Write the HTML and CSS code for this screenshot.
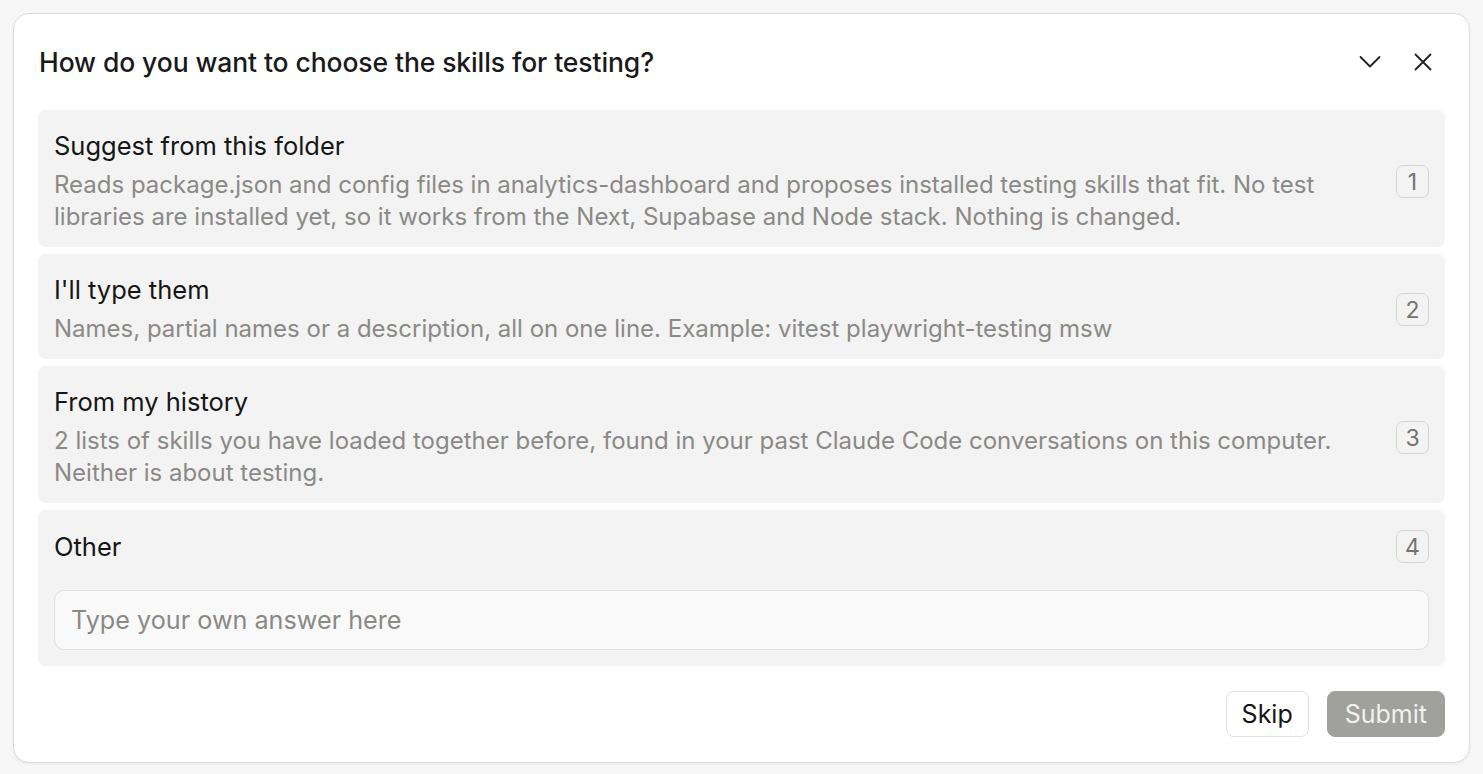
FILE: index.html
```html
<!DOCTYPE html>
<html lang="en">
<head>
<meta charset="utf-8">
<title>Choose skills</title>
<link rel="stylesheet" href="styles.css">
</head>
<body>
<div class="dialog">
  <div class="header">
    <h1 class="title">How do you want to choose the skills for testing?</h1>
    <div class="header-actions">
      <button class="icon-btn" aria-label="Collapse">
        <svg width="22" height="22" viewBox="0 0 22 22" fill="none" stroke="#222" stroke-width="1.8" stroke-linecap="round" stroke-linejoin="round"><path d="M1.5 6 L11 15.5 L20.5 6"/></svg>
      </button>
      <button class="icon-btn" aria-label="Close">
        <svg width="18" height="18" viewBox="0 0 18 18" fill="none" stroke="#222" stroke-width="1.8" stroke-linecap="round"><path d="M1.5 1.5 L16.5 16.5 M16.5 1.5 L1.5 16.5"/></svg>
      </button>
    </div>
  </div>

  <div class="options">
    <div class="option">
      <div class="option-row">
        <div class="option-text">
          <div class="option-title">Suggest from this folder</div>
          <div class="option-desc">Reads package.json and config files in analytics-dashboard and proposes installed testing skills that fit. No test libraries are installed yet, so it works from the Next, Supabase and Node stack. Nothing is changed.</div>
        </div>
        <span class="key">1</span>
      </div>
    </div>
    <div class="option">
      <div class="option-row">
        <div class="option-text">
          <div class="option-title">I'll type them</div>
          <div class="option-desc">Names, partial names or a description, all on one line. Example: vitest playwright-testing msw</div>
        </div>
        <span class="key">2</span>
      </div>
    </div>
    <div class="option">
      <div class="option-row">
        <div class="option-text">
          <div class="option-title">From my history</div>
          <div class="option-desc">2 lists of skills you have loaded together before, found in your past Claude Code conversations on this computer. Neither is about testing.</div>
        </div>
        <span class="key">3</span>
      </div>
    </div>
    <div class="option">
      <div class="option-row">
        <div class="option-text">
          <div class="option-title">Other</div>
        </div>
        <span class="key">4</span>
      </div>
      <input class="answer" type="text" placeholder="Type your own answer here">
    </div>
  </div>

  <div class="footer">
    <button class="btn btn-skip">Skip</button>
    <button class="btn btn-submit">Submit</button>
  </div>
</div>
</body>
</html>
```
FILE: styles.css
```css
* { box-sizing: border-box; }
html, body { margin: 0; padding: 0; }
body {
  background: #f7f7f7;
  padding: 13px;
  font-family: Inter, "Noto Sans", "Liberation Sans", sans-serif;
  color: #1a1a1a;
}
.dialog {
  background: #fff;
  border: 1px solid #dcdcdc;
  border-radius: 16px;
  box-shadow: 0 1px 3px rgba(0,0,0,0.06);
  padding: 24px 24px 25px;
  height: 750px;
}
.header {
  display: flex;
  align-items: center;
  justify-content: space-between;
  height: 48px;
  margin-bottom: 24px;
}
.title {
  margin: 0 0 0 1px;
  font-size: 26.5px;
  font-weight: 500;
  letter-spacing: -0.1px;
}
.header-actions {
  display: flex;
  align-items: center;
  gap: 33px;
  padding-right: 13px;
}
.icon-btn {
  border: 0;
  background: none;
  padding: 0;
  display: flex;
  align-items: center;
  justify-content: center;
  cursor: pointer;
}
.options {
  display: flex;
  flex-direction: column;
  gap: 7px;
}
.option {
  background: #f3f3f3;
  border-radius: 8px;
  padding: 20px 16px 14px;
}
.option-row {
  display: flex;
  align-items: center;
  gap: 24px;
}
.option-text { flex: 1; min-width: 0; }
.option-title {
  font-size: 25.5px;
  line-height: 32px;
  color: #161616;
}
.option-desc {
  margin-top: 7px;
  font-size: 24px;
  line-height: 32px;
  color: #8a8a86;
}
.key {
  flex: none;
  width: 33px;
  height: 33px;
  border: 1.5px solid #d6d6d4;
  border-radius: 7px;
  display: flex;
  align-items: center;
  justify-content: center;
  font-size: 23px;
  color: #74746f;
}
.answer {
  display: block;
  width: 100%;
  margin-top: 27px;
  margin-bottom: 2px;
  height: 60px;
  border: 1px solid #e0e0de;
  border-radius: 10px;
  background: #f9f9f9;
  padding: 0 16px;
  font-family: inherit;
  font-size: 25.2px;
  color: #1a1a1a;
  outline: none;
}
.answer::placeholder { color: #8a8a85; }
.footer {
  display: flex;
  justify-content: flex-end;
  gap: 18px;
  margin-top: 25px;
}
.btn {
  height: 46px;
  border-radius: 8px;
  font-family: inherit;
  font-size: 25px;
  padding: 0 15px;
  cursor: pointer;
}
.btn-skip {
  background: #fff;
  border: 1px solid #e0e0e0;
  color: #161616;
}
.btn-submit {
  padding: 0 17px;
  background: #a0a09c;
  border: 1px solid #a0a09c;
  color: #f2f2f0;
}
```
